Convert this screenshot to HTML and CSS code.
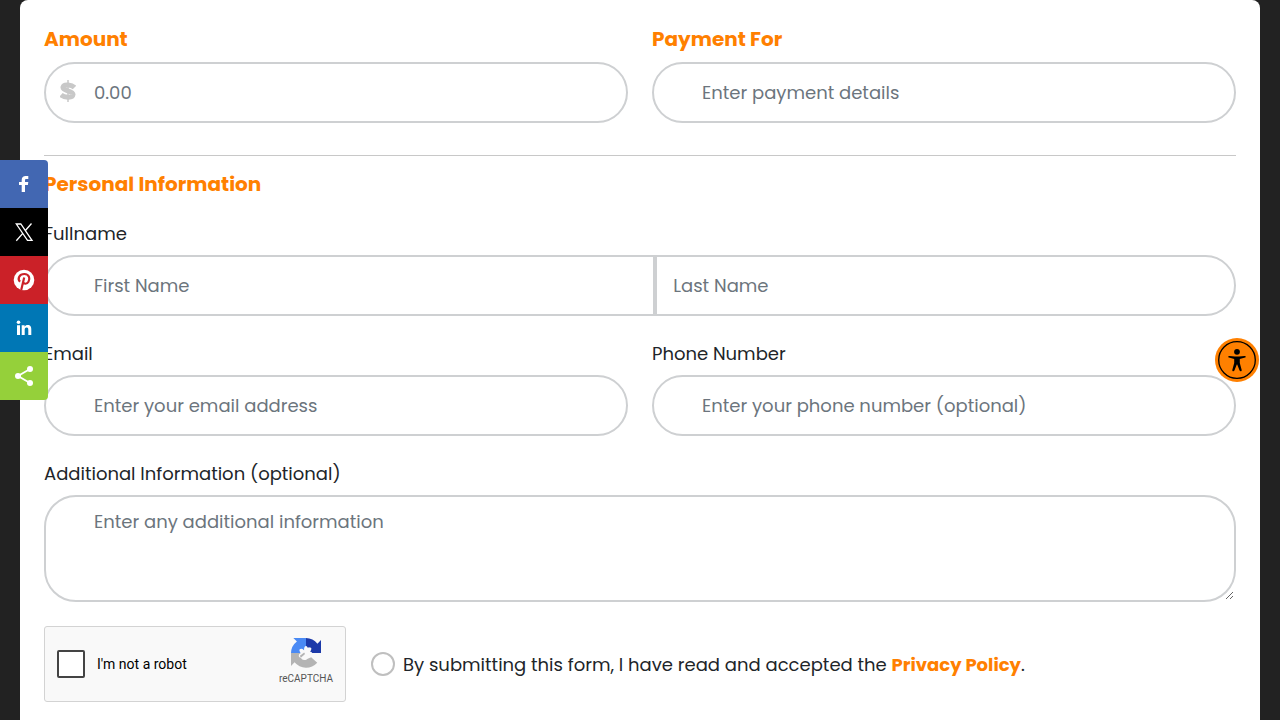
FILE: index.html
```html
<!DOCTYPE html>
<html lang="en">
<head>
  <meta charset="UTF-8" />
  <meta name="viewport" content="width=device-width, initial-scale=1.0" />
  <title>Payment Form</title>
  <link rel="stylesheet" href="styles.css">
</head>
<body>
  <form class="card">
    <div class="row">
      <div class="field">
        <label class="heading" for="amount">Amount</label>
        <div class="input-icon">
          <svg class="dollar" viewBox="0 0 16 22" aria-hidden="true">
            <path d="M8 0v22" stroke="#c8c8c8" stroke-width="1.500" fill="none"/>
            <path d="M14.500 7.500C12 5 4 3.500 3 7.200C2.500 11 13.300 10.500 13 14.500C12.500 18.500 4 17.500 1 14.800" stroke="#c8c8c8" stroke-width="5" fill="none"/>
          </svg>
          <input class="input" id="amount" type="text" placeholder="0.00">
        </div>
      </div>
      <div class="field">
        <label class="heading" for="paymentFor">Payment For</label>
        <input class="input" id="paymentFor" type="text" placeholder="Enter payment details">
      </div>
    </div>

    <hr class="divider">

    <h2 class="heading section-title">Personal Information</h2>

    <div class="field">
      <label for="firstName">Fullname</label>
      <div class="input-group">
        <input class="input first" id="firstName" type="text" placeholder="First Name">
        <input class="input last" type="text" placeholder="Last Name" aria-label="Last Name">
      </div>
    </div>

    <div class="row">
      <div class="field">
        <label for="email">Email</label>
        <input class="input" id="email" type="email" placeholder="Enter your email address">
      </div>
      <div class="field">
        <label for="phone">Phone Number</label>
        <input class="input" id="phone" type="tel" placeholder="Enter your phone number (optional)">
      </div>
    </div>

    <div class="field">
      <label for="info">Additional Information (optional)</label>
      <textarea class="input textarea" id="info" placeholder="Enter any additional information"></textarea>
    </div>

    <div class="form-footer">
      <div class="captcha">
        <input class="captcha-box" id="robot" type="checkbox">
        <label class="captcha-label" for="robot">I'm not a robot</label>
        <div class="captcha-brand">
          <svg class="captcha-logo" viewBox="0 0 64 64" aria-hidden="true">
            <path fill="#1c3aa9" d="M64 32V4.500l-7.600 7.600A32 32 0 0 0 32 0v20l8 0-5 12Z"/>
            <path fill="#4a8af4" d="M32 0H5l7.600 7.600A32 32 0 0 0 0 32h20v-8l12 4Z"/>
            <path fill="#b4b4b4" d="M0 32v27.500l7.600-7.600A32 32 0 0 0 56 53L43 41 32 46l-10-4 8-10Z"/>
            <path fill="#f9f9f9" d="M32 17c4 0 3 7 3 7 5-6 10-4 8 1-1 3-3 4-3 4 7 1 8 8 2 9-3 0-6-2-6-2 0 6-2 11-7 11-6 0-8-5-8-5-4 0-6-5-3-8 2-2 5-2 5-2-6-2-7-9-1-9 4 0 6 4 6 4s-1-10 4-10Z"/>
            <path fill="#b4b4b4" d="M19 38l9-7 2 3-9 8Z"/>
          </svg>
          <span>reCAPTCHA</span>
        </div>
      </div>
      <div class="terms">
        <input class="terms-box" id="terms" type="checkbox">
        <label class="terms-label" for="terms">By submitting this form, I have read and accepted the <a href="#">Privacy Policy</a>.</label>
      </div>
    </div>
  </form>

  <nav class="share-bar" aria-label="Share">
    <a class="facebook" href="#" aria-label="Facebook">
      <svg viewBox="0 0 24 24"><path fill="#fff" d="M9.700 20v-7H7v-3h2.700V8c0-2.800 1.500-4 4-4H16.300v3h-1.600C13.300 7 13 7.500 13 8.300V10h3.300l-.4 3H13v7Z"/></svg>
    </a>
    <a class="twitter" href="#" aria-label="X">
      <svg viewBox="0 0 24 24"><path fill="none" stroke="#fff" stroke-width="1.300" d="M4.300 4h4.500L20 20.300h-4.500ZM19.500 3.500 13.200 10.700M10.800 13.400 4.300 20.800"/></svg>
    </a>
    <a class="pinterest" href="#" aria-label="Pinterest">
      <svg viewBox="0 0 24 24"><circle cx="12" cy="12" r="10.300" fill="#fff"/><path fill="none" stroke="#cb2128" stroke-width="2.200" d="M8 13.800C5 10.500 7.500 6 12.300 6c5.200 0 5.900 4.900 4.200 7.800-1.500 2.600-4.700 2.500-5.300.4M12.200 9.500 9.200 22"/></svg>
    </a>
    <a class="linkedin" href="#" aria-label="LinkedIn">
      <svg viewBox="0 0 24 24"><path fill="#fff" d="M5 9.300h3V19H5ZM9.700 9.300h2.900v1.400c.6-1.100 1.700-1.600 3-1.600 3 0 3.700 1.800 3.700 4.600V19h-3v-4.800c0-1.300-.1-2.600-1.700-2.600s-1.900 1.300-1.900 2.500V19h-3Z"/><circle cx="6.500" cy="6.300" r="1.800" fill="#fff"/></svg>
    </a>
    <a class="sharethis" href="#" aria-label="Share">
      <svg viewBox="0 0 24 24"><path fill="none" stroke="#fff" stroke-width="1.800" d="M18 5 6 12l12 7"/><g fill="#fff"><circle cx="18" cy="5" r="3"/><circle cx="6" cy="12" r="3"/><circle cx="18" cy="19" r="3"/></g></svg>
    </a>
  </nav>

  <button class="accessibility" type="button" aria-label="Accessibility options">
    <svg viewBox="0 0 44 44">
      <circle cx="22" cy="22" r="18.300" fill="none" stroke="#000" stroke-width="1.300"/>
      <circle cx="22" cy="13.800" r="2.900"/>
      <path d="M14.300 17.900 20 18.600h4l5.700-.7c1.300-.1 1.500 1.500.4 1.700L24.800 21v4l1.900 7c.3 1.200-1.500 1.800-2.100.6L22.200 26.500h-.4l-2.400 6.100c-.6 1.200-2.400.6-2.100-.6l1.900-7v-4l-5.300-1.400c-1.100-.2-.9-1.800.4-1.700Z"/>
    </svg>
  </button>
</body>
</html>
```
FILE: styles.css
```css
* {
  box-sizing: border-box;
}
body {
  margin: 0;
  padding: 0 20px;
  font-family: 'Poppins', 'Inter', sans-serif;
  font-size: 18px;
  line-height: 27px;
  color: #212529;
  background: #222;
}
.card {
  display: flex;
  flex-direction: column;
  gap: 24px;
  min-height: 100vh;
  padding: 24px 24px 18px;
  background: #fff;
  border-radius: 8px 8px 0 0;
}
.row {
  display: grid;
  grid-template-columns: 1fr 1fr;
  gap: 24px;
}
.field {
  display: flex;
  flex-direction: column;
  gap: 8px;
}
.heading {
  margin: 0;
  font-size: 20px;
  font-weight: 700;
  line-height: 30px;
  color: #ff8000;
}
.divider {
  width: 100%;
  height: 1px;
  margin: 8px 0 0;
  border: none;
  background: #c8c8c8;
}
.section-title {
  margin: -11px 0 -3px;
}
.input {
  width: 100%;
  height: 61px;
  padding: 0 48px;
  border: 2px solid #ced0d2;
  border-radius: 32px;
  background: #fff;
  font: inherit;
  color: #212529;
}
.input::placeholder {
  color: #6c757d;
  opacity: 1;
}
.input-icon {
  position: relative;
}
.dollar {
  position: absolute;
  top: 18px;
  left: 16px;
  width: 16px;
  height: 22px;
}
.input-group {
  display: grid;
  grid-template-columns: 20fr 19fr;
}
.first {
  border-radius: 32px 0 0 32px;
}
.last {
  padding-left: 16px;
  border-radius: 0 32px 32px 0;
}
.textarea {
  display: block;
  height: 107px;
  padding-top: 11px;
  resize: vertical;
}
.form-footer {
  display: flex;
  align-items: center;
  gap: 25px;
}
.captcha {
  display: flex;
  align-items: center;
  width: 302px;
  height: 76px;
  padding: 0 12px;
  border: 1px solid #d3d3d3;
  border-radius: 3px;
  background: #f9f9f9;
  font-family: Roboto, sans-serif;
  color: #000;
}
.captcha-box {
  appearance: none;
  width: 28px;
  height: 28px;
  margin: 0 12px 0 0;
  border: 2px solid #444;
  border-radius: 2px;
  background: #fff;
}
.captcha-label {
  flex: 1;
  font-size: 14px;
}
.captcha-brand {
  display: flex;
  flex-direction: column;
  align-items: center;
  gap: 5px;
  padding-bottom: 6px;
  font-size: 10px;
  line-height: 12px;
  color: #555;
}
.captcha-logo {
  width: 30px;
  height: 30px;
}
.terms {
  display: flex;
  align-items: center;
  gap: 8px;
}
.terms-box {
  appearance: none;
  flex-shrink: 0;
  width: 24px;
  height: 24px;
  margin: 0;
  border: 2px solid #bfbfbf;
  border-radius: 50%;
  background: #fff;
}
.terms-label a {
  font-weight: 700;
  color: #ff8000;
  text-decoration: none;
}
.share-bar {
  position: fixed;
  top: 160px;
  left: 0;
  width: 48px;
  border-radius: 0 4px 4px 0;
  overflow: hidden;
}
.share-bar a {
  display: flex;
  align-items: center;
  justify-content: center;
  height: 48px;
}
.share-bar svg {
  width: 24px;
  height: 24px;
}
.facebook {
  background: #4267b2;
}
.twitter {
  background: #000;
}
.pinterest {
  background: #cb2128;
}
.linkedin {
  background: #0077b5;
}
.sharethis {
  background: #95d03a;
}
.accessibility {
  position: fixed;
  top: 50%;
  right: 21px;
  width: 44px;
  height: 44px;
  padding: 0;
  border: none;
  border-radius: 50%;
  background: #ff8000;
  transform: translateY(-50%);
  cursor: pointer;
}
.accessibility svg {
  display: block;
}
```
